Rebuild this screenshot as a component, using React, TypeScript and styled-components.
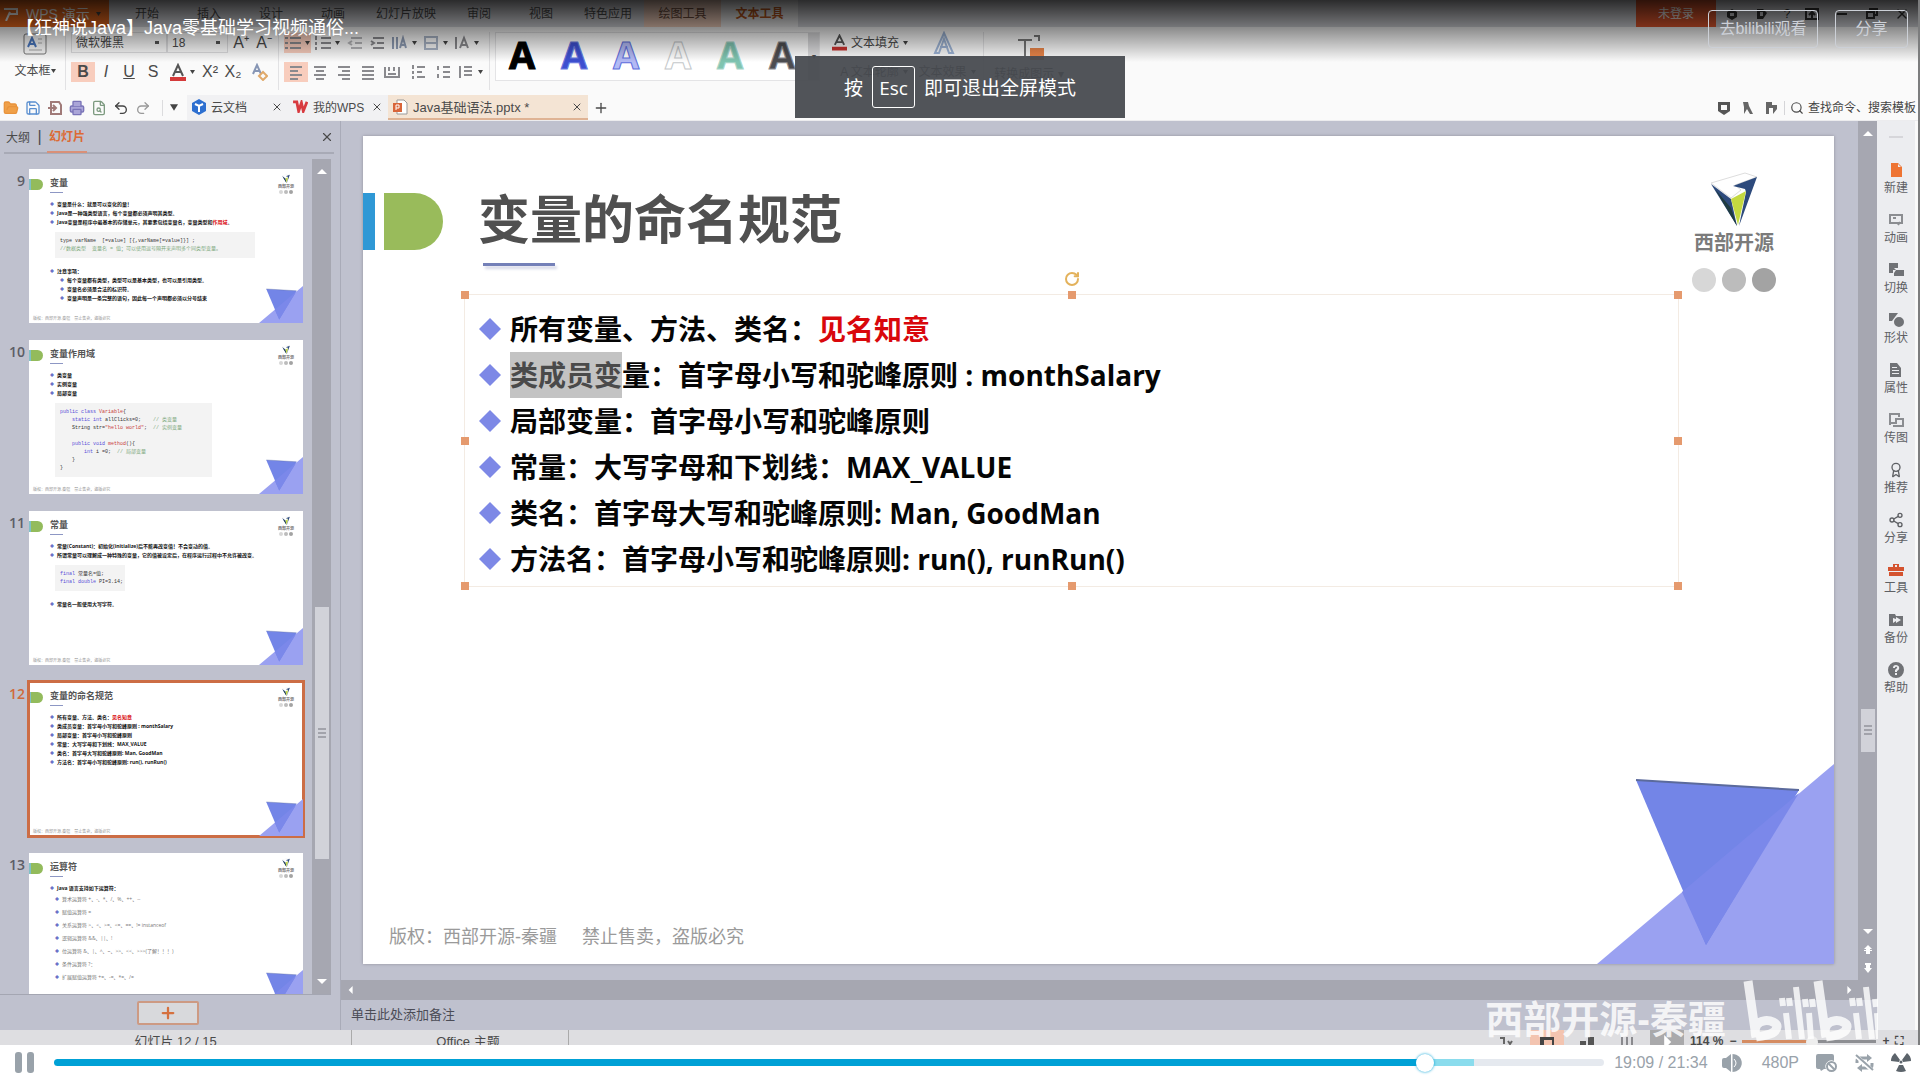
import React from "react";
import styled, { createGlobalStyle, css } from "styled-components";
import {
  FolderOpen,
  Save,
  Printer,
  Undo2,
  Redo2,
  Search,
  Share2,
  Plus,
  X,
  FileSearch,
  Award,
  RotateCw,
} from "lucide-react";

const ui = `"Liberation Sans", "Noto Sans CJK SC", sans-serif`;
const deck = `"Open Sans", "Noto Sans CJK SC", sans-serif`;
const mono = `"Liberation Mono", "Noto Sans CJK SC", monospace`;

const Global = createGlobalStyle`
  * { box-sizing: border-box; }
  body { margin: 0; background: #fff; font-family: ${ui}; color: #4a4a4a; }
  button, input, select { font: inherit; color: inherit; margin: 0; padding: 0; border: 0; background: none; }
  h1, h2, p, ul, ol, pre { margin: 0; padding: 0; }
  ul, ol { list-style: none; }
  svg { display: block; flex: none; }
`;

/* ---------- player shell ---------- */
const Player = styled.div`
  display: flex;
  flex-direction: column;
  height: 100vh;
  overflow: hidden;
`;
const Video = styled.main`
  position: relative;
  flex: 1;
  min-height: 0;
  display: flex;
  flex-direction: column;
  overflow: hidden;
  background: #fafafa;
  border-right: 2px solid #7c7d7e;
`;
const TopShade = styled.header`
  position: absolute;
  inset: 0 -2px auto 0;
  height: 62px;
  padding: 10px 12px 0 16px;
  display: flex;
  align-items: flex-start;
  gap: 17px;
  background: linear-gradient(rgba(0, 0, 0, 0.8), rgba(0, 0, 0, 0));
`;
const VideoTitle = styled.h1`
  flex: 1;
  font-size: 18px;
  line-height: 36px;
  font-weight: 400;
  color: #fff;
`;
const OutlineLink = styled.a<{ $w: number }>`
  width: ${(p) => p.$w}px;
  height: 38px;
  border: 1px solid #ccd0d7;
  border-radius: 4px;
  color: #ccd0d7;
  font-size: 16px;
  line-height: 36px;
  text-align: center;
  text-decoration: none;
`;
const Toast = styled.div`
  position: absolute;
  top: 56px;
  left: 50%;
  width: 330px;
  height: 62px;
  margin-left: -164px;
  display: flex;
  align-items: center;
  justify-content: center;
  gap: 9px;
  background: rgba(70, 73, 79, 0.94);
  color: #fff;
  font-family: ${deck};
  font-size: 19px;
`;
const Key = styled.kbd`
  width: 43px;
  height: 42px;
  border: 1px solid #fff;
  border-radius: 3px;
  font-family: inherit;
  font-size: 19px;
  line-height: 42px;
  text-align: center;
`;
const Watermark = styled.div`
  position: absolute;
  right: 40px;
  bottom: 0;
  display: flex;
  align-items: flex-end;
  gap: 16px;
  color: rgba(255, 255, 255, 0.82);
  font-size: 38px;
  line-height: 50px;
  font-weight: 700;
  height: 66px;
`;

/* ---------- title bar ---------- */
const TitleBar = styled.nav`
  display: flex;
  flex: none;
  height: 27px;
  background: #d6d7dc;
  font-size: 12px;
  line-height: 28px;
`;
const AppTab = styled.div`
  display: flex;
  align-items: center;
  gap: 6px;
  width: 109px;
  padding-left: 4px;
  margin-right: 7px;
  background: #ee6b1e;
  color: #fff;
  font-size: 14px;
`;
const MenuTab = styled.button<{ $tone?: "warm" | "open" }>`
  min-width: 62px;
  padding: 0 12px;
  line-height: 28px;
  ${(p) => p.$tone && css`min-width: 77px; color: #c05a20;`}
  ${(p) => p.$tone === "warm" && css`background: #f2cfbd; color: #6b4a3a;`}
  ${(p) => p.$tone === "open" && css`background: #f2f2f3; font-weight: 700;`}
`;
const Grow = styled.span`
  flex: 1;
`;
const Login = styled.button`
  width: 80px;
  background: #e4592f;
  color: #fff;
`;
const WindowTools = styled.div`
  display: flex;
  align-items: center;
  justify-content: space-between;
  width: 202px;
  padding: 0 8px 0 8px;
  color: #333;
`;

/* ---------- ribbon ---------- */
const Ribbon = styled.section`
  display: flex;
  flex: none;
  height: 68px;
  padding-top: 5px;
  font-size: 12px;
`;
const Group = styled.div<{ $w: number }>`
  display: flex;
  flex-direction: column;
  gap: 8px;
  flex: none;
  width: ${(p) => p.$w}px;
  height: 58px;
  padding-left: 5px;
  border-right: 1px solid #e2e2e4;
`;
const Row = styled.div`
  display: flex;
  align-items: center;
  height: 21px;
`;
const Tool = styled.button<{ $w: number; $on?: boolean }>`
  display: flex;
  align-items: center;
  justify-content: center;
  gap: 4px;
  flex: none;
  width: ${(p) => p.$w}px;
  height: 20px;
  background: ${(p) => (p.$on ? "#f8cdbd" : "none")};
  font-size: 16px;
  line-height: 20px;
  white-space: nowrap;
`;
const TextTool = styled(Tool)`
  font-size: 12px;
`;
const BoxTool = styled.button`
  display: flex;
  flex-direction: column;
  align-items: center;
  gap: 4px;
  font-size: 12px;
  line-height: 20px;
`;
const Pick = styled.select<{ $w: number }>`
  appearance: none;
  width: ${(p) => p.$w}px;
  height: 21px;
  padding-left: 4px;
  border: 1px solid #dcdcde;
  font-size: 12px;
  background: linear-gradient(#555, #555) right 7px center / 4px 3px no-repeat;
`;
const Gallery = styled.div`
  display: flex;
  flex: none;
  width: 325px;
  height: 49px;
  margin: 0 8px 0 5px;
  border: 1px solid #e4e4e6;
  background: #fff;
`;
const Art = styled.button<{ $c: string; $o: string }>`
  width: 52px;
  height: 42px;
  font-family: ${deck};
  font-size: 38px;
  line-height: 42px;
  font-weight: 700;
  color: ${(p) => p.$c};
  -webkit-text-stroke: 1px ${(p) => p.$o};
`;
const GalleryMore = styled.button`
  flex: 1;
  background: #dcdcde;
  font-size: 8px;
`;

/* ---------- document tabs ---------- */
const DocBar = styled.section`
  display: flex;
  align-items: center;
  flex: none;
  height: 26px;
  border-bottom: 1px solid #ececee;
  font-size: 12px;
`;
const Quick = styled.button<{ $c: string }>`
  width: 22px;
  display: grid;
  place-items: center;
  color: ${(p) => p.$c};
`;
const QuickSet = styled.div`
  display: flex;
  width: 187px;
`;
const QuickMore = styled(Quick)`
  margin-left: 8px;
  border-left: 1px solid #dcdcde;
`;
const DocTab = styled.div<{ $w: number; $on?: boolean }>`
  display: flex;
  align-items: center;
  gap: 5px;
  width: ${(p) => p.$w}px;
  height: 25px;
  padding: 0 5px;
  white-space: nowrap;
  background: ${(p) => (p.$on ? "#f4e4d4" : "#f1f1f3")};
  border-bottom: 2px solid ${(p) => (p.$on ? "#dfb394" : "#f1f1f3")};
  font-size: ${(p) => (p.$on ? 13 : 12)}px;
`;
const Close = styled.button`
  margin-left: auto;
`;
const Find = styled.label`
  display: flex;
  align-items: center;
  gap: 4px;
  padding-left: 5px;
  border-left: 1px solid #d5d5d8;
`;
const FindBox = styled.input`
  width: 110px;
  &::placeholder { color: #444; opacity: 1; }
`;

/* ---------- workspace ---------- */
const Work = styled.section`
  display: flex;
  flex: 1;
  min-height: 0;
  background: #bfc1ce;
`;
const Side = styled.aside`
  display: flex;
  flex-direction: column;
  flex: none;
  width: 341px;
  border-right: 1px solid #a9abb8;
`;
const SideHead = styled.div`
  display: flex;
  align-items: center;
  flex: none;
  height: 33px;
  margin: 0 6px 5px 4px;
  border-bottom: 2px solid #a8aab6;
  font-size: 12px;
`;
const SideTab = styled.button<{ $on?: boolean }>`
  height: 33px;
  padding: 0 2px;
  ${(p) => p.$on && css`color: #dc6a35; font-weight: 700; border-bottom: 2px solid #d99078;`}
`;
const SideBody = styled.div`
  display: flex;
  flex: 1;
  min-height: 0;
  margin-right: 9px;
  border-bottom: 1px solid #a4a6b2;
`;
const Deck = styled.ol`
  flex: 1;
  display: flex;
  flex-direction: column;
  gap: 17px;
  padding-top: 10px;
  overflow: hidden;
`;
const Entry = styled.li<{ $on?: boolean }>`
  display: flex;
  flex: none;
  height: 154px;
  font-size: 14px;
  line-height: 24px;
  font-family: ${deck};
  font-weight: 600;
  color: ${(p) => (p.$on ? "#cf6a3d" : "#5c5d66")};
`;
const Num = styled.span`
  width: 29px;
  padding-right: 4px;
  text-align: right;
`;
const Mini = styled.article<{ $on?: boolean }>`
  position: relative;
  width: 274px;
  height: 154px;
  background: #fff;
  color: #111;
  font-family: ${deck};
  font-size: 5px;
  line-height: 9px;
  overflow: hidden;
  outline: ${(p) => (p.$on ? "3px solid #cc6d45" : "none")};
  outline-offset: -1px;
`;
const MiniHead = styled.div`
  display: flex;
  align-items: flex-start;
  height: 31px;
  padding-top: 5px;
`;
const MiniMark = styled.span`
  width: 14px;
  height: 11px;
  margin: 5px 7px 0 0;
  border-left: 2px solid #7fc0c8;
  border-radius: 0 6px 6px 0;
  background: #93bb5c;
`;
const MiniTitle = styled.h2`
  flex: 1;
  font-size: 9px;
  line-height: 18px;
  color: #555;
  &::after { content: ""; display: block; width: 13px; height: 1px; background: #8d97c4; }
`;
const MiniLine = styled.p<{ $kind: string }>`
  padding-left: ${(p) => (p.$kind === "b" ? 21 : p.$kind === "s" ? 31 : 26)}px;
  line-height: ${(p) => (p.$kind === "l" ? 12 : 9)}px;
  font-weight: ${(p) => (p.$kind === "l" ? 400 : 700)};
  color: ${(p) => (p.$kind === "l" ? "#777" : "#111")};
  white-space: nowrap;
  &::before { content: "◆"; color: #6a72c8; display: inline-block; width: 7px; font-size: 4px; font-weight: 400; }
`;
const MiniCode = styled.div<{ $w: number }>`
  width: ${(p) => p.$w}px;
  margin: 5px 0 9px 26px;
  padding: 5px 5px;
  background: #f3f3f3;
  font-family: ${mono};
  font-weight: 400;
  font-size: 5px;
  color: #333;
`;
const CodeLine = styled.pre`
  height: 8px;
  line-height: 8px;
  font-family: inherit;
`;
const Ink = styled.span<{ $c: string }>`
  color: ${(p) => p.$c};
`;
const MiniFoot = styled.p`
  position: absolute;
  left: 4px;
  bottom: 0;
  font-size: 4px;
  font-weight: 400;
  color: #999;
`;
const Corner = styled.div`
  position: absolute;
  right: 0;
  bottom: 0;
`;
const MiniBrand = styled.div`
  display: flex;
  flex-direction: column;
  align-items: center;
  width: 16px;
  margin-right: 9px;
  font-size: 4px;
  line-height: 7px;
  font-weight: 700;
  color: #777;
`;
const SideFoot = styled.div`
  display: grid;
  place-items: center;
  flex: none;
  height: 35px;
  padding-right: 4px;
`;
const AddSlide = styled.button`
  display: grid;
  place-items: center;
  width: 62px;
  height: 24px;
  border: 2px solid #cd9a83;
  border-radius: 2px;
  background: #d8d9dc;
  color: #d5713f;
`;
const VBar = styled.div<{ $w: number }>`
  display: flex;
  flex-direction: column;
  align-items: center;
  flex: none;
  width: ${(p) => p.$w}px;
  padding: 7px 0;
  gap: 8px;
  background: #a6a7b1;
`;
const Spacer = styled.span<{ $n: number }>`
  flex: ${(p) => p.$n};
`;
const Grip = styled.span<{ $n: number }>`
  display: grid;
  place-items: center;
  flex: ${(p) => p.$n};
  width: 14px;
  background: #d1d2d9;
`;
const Stage = styled.div`
  display: flex;
  flex-direction: column;
  flex: 1;
  min-width: 0;
`;
const StageTop = styled.div`
  display: flex;
  flex: 1;
  min-height: 0;
`;
const HBar = styled.div`
  display: flex;
  align-items: center;
  justify-content: space-between;
  flex: none;
  height: 20px;
  padding: 0 24px 0 6px;
  background: #a6a7b1;
`;
const Notes = styled.input`
  flex: none;
  height: 30px;
  padding: 0 0 2px 10px;
  font-size: 13px;
  &::placeholder { color: #4b4c56; opacity: 1; }
`;

/* ---------- current slide ---------- */
const Slide = styled.article`
  position: relative;
  display: flex;
  flex-direction: column;
  flex: 1;
  margin: 15px 24px 16px 22px;
  background: #fff;
  box-shadow: 0 0 3px #90919c;
  font-family: ${deck};
  color: #050505;
`;
const SlideHead = styled.div`
  display: flex;
  height: 158px;
`;
const Heading = styled.div`
  flex: 1;
  padding-top: 57px;
`;
const HeadRow = styled.div`
  display: flex;
  align-items: flex-start;
  gap: 9px;
  height: 57px;
`;
const BlueBar = styled.span`
  width: 12px;
  height: 57px;
  background: #2f98d5;
`;
const GreenTab = styled.span`
  width: 59px;
  height: 57px;
  margin-right: 26px;
  border-radius: 0 29px 29px 0;
  background: #99bb5b;
`;
const SlideTitle = styled.h2`
  font-size: 52px;
  line-height: 52px;
  font-weight: 700;
  color: #505050;
`;
const Rule = styled.div`
  width: 72px;
  height: 3px;
  margin: 13px 0 0 120px;
  background: #7480b8;
  box-shadow: 2px 3px 3px #d4d6e6;
`;
const Brand = styled.div`
  display: flex;
  flex-direction: column;
  align-items: center;
  width: 84px;
  margin-right: 58px;
  padding-top: 36px;
  font-size: 20px;
  line-height: 34px;
  font-weight: 700;
  color: #7b7b7b;
`;
const BrandDots = styled.div`
  padding-top: 8px;
`;
const TextFrame = styled.div`
  position: relative;
  margin: 0 155px 0 101px;
  padding: 11px 0 4px 14px;
  border: 1px solid #f3ebe3;
`;
const Handle = styled.span<{ $x: number; $y: number }>`
  position: absolute;
  left: ${(p) => p.$x}%;
  top: ${(p) => p.$y}%;
  width: 8px;
  height: 8px;
  margin: -4px 0 0 -4px;
  background: #e59a6e;
`;
const Rotate = styled.span`
  position: absolute;
  left: 50%;
  top: -24px;
  margin-left: -8px;
  color: #e3b25c;
`;
const Point = styled.li`
  display: flex;
  align-items: center;
  gap: 9px;
  height: 46px;
  font-size: 28px;
  line-height: 46px;
  font-weight: 700;
  white-space: pre;
`;
const Red = styled.span`
  color: #d9080c;
`;
const Picked = styled.mark`
  display: inline-block;
  background: #c3c3c3;
  color: #4a4a4a;
`;
const Rights = styled.p`
  margin-top: auto;
  padding: 0 0 14px 26px;
  font-family: ${ui};
  font-size: 18px;
  line-height: 26px;
  color: #9a9a9a;
  white-space: pre;
`;

/* ---------- right tool strip & status ---------- */
const Strip = styled.nav`
  display: flex;
  flex-direction: column;
  align-items: center;
  flex: none;
  width: 41px;
  padding-top: 15px;
  background: #ecedf0;
  border-right: 3px solid #fafafa;
`;
const StripGrip = styled.span`
  width: 14px;
  height: 2px;
  margin-bottom: 24px;
  background: #d6d6da;
`;
const StripItem = styled.button`
  display: flex;
  flex-direction: column;
  align-items: center;
  height: 50px;
  font-size: 12px;
  line-height: 20px;
  color: #5e6064;
`;
const Status = styled.footer`
  display: flex;
  flex: none;
  height: 15px;
  overflow: hidden;
  background: #dedee1;
  font-size: 13px;
  line-height: 23px;
`;
const StatusCell = styled.span<{ $w: number }>`
  width: ${(p) => p.$w}px;
  padding-left: ${(p) => (p.$w > 300 ? 0 : 16)}px;
  border-right: 1px solid #aaa;
  text-align: center;
`;
const StatusTools = styled.div`
  display: flex;
  align-items: center;
  width: 428px;
  height: 23px;
  gap: 6px;
  font-size: 12px;
  font-weight: 700;
`;
const ViewButton = styled.button<{ $bg?: string }>`
  display: grid;
  place-items: center;
  width: 34px;
  height: 23px;
  background: ${(p) => p.$bg || "none"};
`;
const Zoom = styled.input`
  appearance: none;
  width: 134px;
  height: 3px;
  background: linear-gradient(90deg, #d58c62 52%, #8d8e92 52%);
  &::-webkit-slider-thumb { appearance: none; width: 12px; height: 12px; border-radius: 50%; background: #eee; }
`;

/* ---------- player controls ---------- */
const Controls = styled.section`
  display: flex;
  align-items: center;
  flex: none;
  height: 35px;
  padding: 0 9px 0 15px;
  background: #fff;
  color: #99a2aa;
  font-size: 16px;
`;
const Ctl = styled.button<{ $gap: number; $dark?: boolean }>`
  flex: none;
  margin-left: ${(p) => p.$gap}px;
  color: ${(p) => (p.$dark ? "#5c646b" : "#99a2aa")};
  white-space: nowrap;
`;
const Seek = styled.input`
  appearance: none;
  flex: 1;
  min-width: 0;
  height: 7px;
  margin: 0 10px 0 20px;
  border-radius: 4px;
  background: linear-gradient(90deg, #00a1d6 88.4%, #8adced 88.4%, #8adced 91.6%, #e5e9ef 91.6%);
  &::-webkit-slider-thumb {
    appearance: none;
    width: 18px;
    height: 18px;
    border-radius: 50%;
    background: #fff;
    box-shadow: 0 0 3px #00a1d6;
  }
`;
const Time = styled.span`
  white-space: nowrap;
`;

/* ---------- drawings ---------- */
const Arrow = ({ d = "down", s = 10 }: { d?: string; s?: number }) => (
  <svg width={s} height={s} viewBox="0 0 10 10" fill="#fff">
    <path d={d === "up" ? "M0 8 5 3l5 5z" : d === "left" ? "M7 0 2 5l5 5z" : d === "right" ? "M3 0l5 5-5 5z" : "M0 2h10L5 7z"} />
  </svg>
);
const Caret = ({ w = 5 }: { w?: number }) => (
  <svg width={w} height={w - 1} viewBox="0 0 10 8" fill="#444"><path d="M0 0h10L5 8z" /></svg>
);
const DoubleArrow = ({ up }: { up?: boolean }) => (
  <svg width="10" height="10" viewBox="0 0 10 10" fill="#fff">
    {up ? <path d="M1 4 5 0l4 4H7v1h2v1H7v3H3V6H1V5h2V4z" /> : <path d="M2 0h6v2H7v3h2L5 10 1 5h2V2H2z" />}
  </svg>
);
const GripLines = () => (
  <svg width="8" height="10" stroke="#a2a3ab" strokeWidth="2"><path d="M0 1h8M0 5h8M0 9h8" /></svg>
);
const Lines = ({ d, c = "#8a8a8e" }: { d: string; c?: string }) => (
  <svg width="16" height="16" viewBox="0 0 16 16" fill="none" stroke={c} strokeWidth="2"><path d={d} /></svg>
);
const Solid = ({ d, c = "#707276" }: { d: string; c?: string }) => (
  <svg width="16" height="16" viewBox="0 0 16 16" fill={c} fillRule="evenodd"><path d={d} /></svg>
);
const Triangles = ({ w }: { w: number }) => (
  <svg width={w} height={Math.round((w * 200) / 237)} viewBox="0 0 237 200" preserveAspectRatio="none">
    <path d="M0 200 237 0v200z" fill="#9aa1f1" />
    <path d="M39 16 202 26 109 181z" fill="#7385e7" />
    <path d="M39 16 202 26" stroke="#5b6a9c" strokeWidth="2" />
    <path d="M202 29 109 181 85 128z" fill="#7b88ea" />
  </svg>
);
const Mark = ({ w }: { w: number }) => (
  <svg width={w} height={Math.round((w * 54) / 46)} viewBox="0 0 46 54">
    <path d="M0 11 34 1 46 5 24 13 30 18 20 26z" fill="#fff" stroke="#ddd" strokeWidth="1" />
    <path d="M0 12 20 27 26 54z" fill="#2d4a7c" />
    <path d="M46 5 22 14 34 17 35 20 28 54z" fill="#2d4a7c" />
    <path d="M20 27 35 19 27 53z" fill="#c4d940" />
    <path d="M4 17 20 36 26 54z" fill="#1f3b3f" />
  </svg>
);
const Dots = ({ w }: { w: number }) => (
  <svg width={w} height={Math.round((w * 24) / 84)} viewBox="0 0 84 24">
    <circle cx="12" cy="12" r="12" fill="#d7d7d7" />
    <circle cx="42" cy="12" r="12" fill="#bcbcbc" />
    <circle cx="72" cy="12" r="12" fill="#a3a3a3" />
  </svg>
);
const Diamond = () => (
  <svg width="22" height="22" viewBox="0 0 22 22"><path d="M11 0 22 11 11 22 0 11z" fill="#7d88e6" /></svg>
);
const SiteLogo = () => (
  <svg width="136" height="66" viewBox="0 0 136 66" fill="none" stroke="#fff" strokeOpacity=".8" strokeWidth="9">
    <path d="M6 2 14 58C8 36 36 40 35 48 34 56 20 57 14 58" />
    <path d="M44 34l3 26M40 19l1 8M47 19l1 8M54 8l6 52M67 34l2 26M63 20l1 8M70 20l1 8" strokeWidth="6" />
    <path d="M76 2 84 58C78 36 106 40 105 48 104 56 90 57 84 58" />
    <path d="M114 34l3 26M110 19l1 8M117 19l1 8M124 8l6 52M135 34l2 26M133 20l1 8" strokeWidth="6" />
  </svg>
);

/* ---------- data ---------- */
const menus = ["开始", "插入", "设计", "动画", "幻灯片放映", "审阅", "视图", "特色应用"];
const arts = [
  ["#000", "#000"],
  ["#3d4fd0", "#6a7ae0"],
  ["#b3baf5", "#5f6fdc"],
  ["#fff", "#c5c9cb"],
  ["#7fc4b0", "#a8d5c8"],
  ["#4c4c50", "#8b8b90"],
];
const strip: [string, React.ReactNode][] = [
  ["新建", <Solid c="#ee7433" d="M3 1h7l4 4v10H3zM10 2v3h3z" />],
  ["动画", <Lines c="#8b8d91" d="M2 3h12v8H2zM5 6h3M10 13l2-3" />],
  ["切换", <Solid d="M1 1h9v5H6l2 2H5v3H1zM8 8h8v6H6v-3z" />],
  ["形状", <Solid d="M1 1h9L7 5 4 9H1zM11 5a5 5 0 1 1 0 10 5 5 0 0 1 0-10z" />],
  ["属性", <Solid d="M2 1h7l4 5v9H2zM4 5h5v1H4zM4 8h7v1H4zM4 11h7v1H4z" />],
  ["传图", <Lines c="#8b8d91" d="M2 13V2h9v3M5 14h10V7H8v4H3" />],
  ["推荐", <Award size={16} />],
  ["分享", <Share2 size={16} />],
  ["工具", <Solid c="#d4532f" d="M5 2h6v3h5v4H0V5h5zM7 3v2h2V3zM1 10h14v4H1z" />],
  ["备份", <Solid d="M1 2h6l1 2h7v10H1zM5 6v5l3-2v2l5-3-5-3v2z" />],
  ["帮助", <Solid d="M8 0a8 8 0 1 1 0 16A8 8 0 0 1 8 0zM5 6h2c0-2 3-1 2 0L7 8v2h2V9c4-2 2-6-1-6-2 0-3 1-3 3zM7 11h2v2H7z" />],
];
const K = "#5a50d8", G = "#7da97d", R = "#c84040";

const MiniSlide = ({ n, title, on, children }: { n: number; title: string; on?: boolean; children: React.ReactNode }) => (
  <Entry $on={on}>
    <Num>{n}</Num>
    <Mini $on={on}>
      <MiniHead>
        <MiniMark />
        <MiniTitle>{title}</MiniTitle>
        <MiniBrand><Mark w={8} />西部开源<Dots w={14} /></MiniBrand>
      </MiniHead>
      {children}
      <MiniFoot>版权：西部开源-秦疆　禁止售卖，盗版必究</MiniFoot>
      <Corner><Triangles w={44} /></Corner>
    </Mini>
  </Entry>
);
const L = ({ k = "b", children }: { k?: string; children: React.ReactNode }) => <MiniLine $kind={k}>{children}</MiniLine>;

export default function App() {
  return (
    <Player>
      <Global />
      <Video>
        <TitleBar aria-label="菜单">
          <AppTab>
            <svg width="16" height="14" viewBox="0 0 16 14" fill="none" stroke="#fff" strokeWidth="2"><path d="M0 2h13v5H5M2 14l4-9" /></svg>
            WPS 演示 <Caret />
          </AppTab>
          {menus.map((m) => <MenuTab key={m}>{m}</MenuTab>)}
          <MenuTab $tone="warm">绘图工具</MenuTab>
          <MenuTab $tone="open">文本工具</MenuTab>
          <Grow />
          <Login>未登录</Login>
          <WindowTools>
            <Solid c="#333" d="M8 3l5 3v5l-5 3-5-3V6zM6 7v3h4V7z" />
            <Solid c="#333" d="M3 3h6l4 4-4 6H3zM6 6v4h3V6z" />
            <span>?</span>
            <Lines c="#333" d="M2 3h12v10H2zM8 12V6M5 9l3-3 3 3" />
            <Lines c="#333" d="M3 8h10" />
            <Lines c="#333" d="M3 6h7v6H3zM6 6V3h7v6h-3" />
            <X size={16} />
          </WindowTools>
        </TitleBar>

        <Ribbon aria-label="文本工具">
          <Group $w={66}>
            <BoxTool>
              <svg width="24" height="24" viewBox="0 0 24 24" fill="none" stroke="#777"><rect x="1" y="2" width="22" height="20" rx="2" /><path d="M5 15 9 6l4 9M6 12h6" stroke="#4a78c0" strokeWidth="2" /><path d="M15 7h4M15 11h4M6 18h13" stroke="#aaa" /></svg>
              <Row>文本框 <Caret /></Row>
            </BoxTool>
          </Group>
          <Group $w={213}>
            <Row>
              <Pick $w={96} aria-label="字体"><option>微软雅黑</option></Pick>
              <Pick $w={61} aria-label="字号"><option>18</option></Pick>
              <Tool $w={26}>A⁺</Tool>
              <Tool $w={20}>A⁻</Tool>
            </Row>
            <Row>
              <Tool $w={24} $on><b>B</b></Tool>
              <Tool $w={22}><i>I</i></Tool>
              <Tool $w={24}><u>U</u></Tool>
              <Tool $w={24}>S</Tool>
              <Tool $w={34}>
                <svg width="16" height="18" viewBox="0 0 16 18" fill="none" stroke="#555" strokeWidth="2"><path d="M3 13 8 2l5 11M5 9h6" /><path d="M0 16h16" stroke="#d43a3a" strokeWidth="4" /></svg>
                <Caret />
              </Tool>
              <Tool $w={22}>X²</Tool>
              <Tool $w={24}>X₂</Tool>
              <Tool $w={30}>
                <svg width="16" height="18" viewBox="0 0 16 18" fill="none" stroke="#8796b5" strokeWidth="2"><path d="M1 11 5 2l4 9M3 8h5" /><path d="M7 13l4-4 4 4-4 4z" stroke="#e0a96a" /></svg>
              </Tool>
            </Row>
          </Group>
          <Group $w={211}>
            <Row>
              <Tool $w={27} $on><Lines d="M5 3h11M5 8h11M5 13h11M0 3h3M0 8h3M0 13h3" /><Caret /></Tool>
              <Tool $w={33}><Lines d="M6 3h10M6 8h10M6 13h10M1 1v4M1 7v3M1 12v3" /><Caret /></Tool>
              <Tool $w={22}><Lines c="#b5b5b8" d="M4 3h11M8 8h7M4 13h11M5 6 2 8l3 2" /></Tool>
              <Tool $w={22}><Lines d="M4 3h11M8 8h7M4 13h11M2 6l3 2-3 2" /></Tool>
              <Tool $w={32}><Lines c="#8f9db5" d="M1 2v12M5 2v12M8 13l3-10 3 10M9 10h5" /><Caret /></Tool>
              <Tool $w={30}><Lines c="#a9b4c6" d="M2 2h12v12H2zM2 8h12" /><Caret /></Tool>
              <Tool $w={32}><Lines d="M2 2v12M6 13 10 3l4 10M7 10h6" /><Caret /></Tool>
            </Row>
            <Row>
              <Tool $w={24} $on><Lines d="M2 3h12M2 7h8M2 11h12M2 15h8" /></Tool>
              <Tool $w={24}><Lines d="M2 3h12M4 7h8M2 11h12M4 15h8" /></Tool>
              <Tool $w={24}><Lines d="M2 3h12M6 7h8M2 11h12M6 15h8" /></Tool>
              <Tool $w={24}><Lines d="M2 3h12M2 7h12M2 11h12M2 15h12" /></Tool>
              <Tool $w={24}><Lines d="M1 3v10h14V3M5 3v4M10 3v4M4 10h8" /></Tool>
              <Tool $w={27}><Lines d="M3 1v4M3 7v3M3 12v3M7 3h8M7 8h5M7 13h8" /></Tool>
              <Tool $w={24}><Lines d="M3 2v4M3 10v4M8 3h7M8 8h7M8 13h7" /></Tool>
              <Tool $w={30}><Lines d="M2 2v12M6 3h8M6 7h8M6 11h8" /><Caret /></Tool>
            </Row>
          </Group>
          <Gallery>
            {arts.map(([c, o]) => <Art key={c} $c={c} $o={o}>A</Art>)}
            <GalleryMore aria-label="更多">▾</GalleryMore>
          </Gallery>
          <Group $w={156}>
            <Row>
              <TextTool $w={74}>
                <svg width="15" height="18" viewBox="0 0 16 18" fill="none" stroke="#555" strokeWidth="2"><path d="M3 11 8 1l5 10M5 8h6" /><path d="M0 15h16" stroke="#c8322f" strokeWidth="4" /></svg>
                文本填充 <Caret />
              </TextTool>
              <TextTool $w={74}>
                <svg width="22" height="24" viewBox="0 0 22 24" fill="none" stroke="#9db4d6" strokeWidth="2"><path d="M2 22 11 2l9 20h-4l-5-14-5 14zM7 16h8" /></svg>
              </TextTool>
            </Row>
            <Row>
              <TextTool $w={82}>A 文本轮廓 <Caret /></TextTool>
              <TextTool $w={64}>文本效果 <Caret /></TextTool>
            </Row>
          </Group>
          <BoxTool>
            <svg width="90" height="28" viewBox="0 0 90 28" fill="none" stroke="#777" strokeWidth="2"><path d="M34 8h14M41 8v16M50 4h5v5" /><path d="M46 16h14v12H46z" fill="#e98448" stroke="none" /></svg>
            <span>转换成图示 ▾</span>
          </BoxTool>
        </Ribbon>

        <DocBar aria-label="文档">
          <QuickSet>
            <Quick $c="#e8933c" aria-label="打开"><FolderOpen size={16} fill="#f0a048" /></Quick>
            <Quick $c="#5a8fd0" aria-label="保存"><Save size={16} /></Quick>
            <Quick $c="#b06a6a" aria-label="输出"><Lines c="#a07a78" d="M4 2h8l2 3v9H4zM1 8h8M6 5l3 3-3 3" /></Quick>
            <Quick $c="#7a74b8" aria-label="打印"><Printer size={16} fill="#aaa5d8" /></Quick>
            <Quick $c="#7d9a80" aria-label="预览"><FileSearch size={16} /></Quick>
            <Quick $c="#444" aria-label="撤销"><Undo2 size={16} /></Quick>
            <Quick $c="#999" aria-label="重做"><Redo2 size={16} /></Quick>
            <QuickMore $c="#555" aria-label="更多"><Caret w={8} /></QuickMore>
          </QuickSet>
          <DocTab $w={101}>
            <svg width="14" height="16" viewBox="0 0 14 16"><path d="M7 0 14 4v8l-7 4-7-4V4z" fill="#2d6fd0" /><path d="M3 5l4 2 4-2M7 7v6" stroke="#fff" strokeWidth="2" fill="none" /></svg>
            云文档<Close aria-label="关闭"><X size={12} /></Close>
          </DocTab>
          <DocTab $w={100}>
            <svg width="15" height="13" viewBox="0 0 16 14" fill="none" stroke="#d83a3f" strokeWidth="3"><path d="M0 2h4l2 10 3-9 2 9 4-10" /></svg>
            我的WPS<Close aria-label="关闭"><X size={12} /></Close>
          </DocTab>
          <DocTab $w={200} $on>
            <svg width="15" height="16" viewBox="0 0 15 16"><path d="M4 1h7l3 3v11H4z" fill="#fff" stroke="#999" /><path d="M0 4h9v9H0z" fill="#d9653a" /><path d="M3 11V6h3v3H3" stroke="#fff" fill="none" /></svg>
            Java基础语法.pptx *<Close aria-label="关闭"><X size={12} /></Close>
          </DocTab>
          <Tool $w={26} aria-label="新建标签"><Plus size={16} /></Tool>
          <Grow />
          <Tool $w={24}><Solid c="#555" d="M2 2h12v9l-6 4-6-4zM5 5v5h6V5z" /></Tool>
          <Tool $w={24}><Solid c="#666" d="M3 2h5l1 4 4 8h-3L7 9l-3 5V7z" /></Tool>
          <Tool $w={24}><Solid c="#666" d="M2 2h6v3h5v4l-4 5V8H5v6H2z" /></Tool>
          <Find>
            <Search size={14} />
            <FindBox placeholder="查找命令、搜索模板" aria-label="查找命令" />
          </Find>
        </DocBar>

        <Work>
          <Side>
            <SideHead>
              <SideTab>大纲</SideTab><Tool $w={15}>|</Tool><SideTab $on>幻灯片</SideTab>
              <Close aria-label="关闭窗格"><X size={14} /></Close>
            </SideHead>
            <SideBody>
              <Deck>
                <MiniSlide n={9} title="变量">
                  <L>变量是什么：就是可以变化的量！</L>
                  <L>Java是一种强类型语言，每个变量都必须声明其类型。</L>
                  <L>Java变量是程序中最基本的存储单元，其要素包括变量名，变量类型和<Red>作用域</Red>。</L>
                  <MiniCode $w={200}>
                    <CodeLine>{"type varName  [=value] [{,varName[=value]}] ;"}</CodeLine>
                    <CodeLine><Ink $c={G}>//数据类型  变量名 = 值；可以使用逗号隔开来声明多个同类型变量。</Ink></CodeLine>
                  </MiniCode>
                  <L>注意事项：</L>
                  <L k="s">每个变量都有类型，类型可以是基本类型，也可以是引用类型。</L>
                  <L k="s">变量名必须是合法的标识符。</L>
                  <L k="s">变量声明是一条完整的语句，因此每一个声明都必须以分号结束</L>
                </MiniSlide>
                <MiniSlide n={10} title="变量作用域">
                  <L>类变量</L><L>实例变量</L><L>局部变量</L>
                  <MiniCode $w={157}>
                    <CodeLine><Ink $c={K}>public class </Ink><Ink $c={R}>Variable</Ink>{"{"}</CodeLine>
                    <CodeLine>{"    "}<Ink $c={K}>static int</Ink>{" allClicks=0;    "}<Ink $c={G}>// 类变量</Ink></CodeLine>
                    <CodeLine>{"    String str="}<Ink $c={R}>"hello world"</Ink>{";  "}<Ink $c={G}>// 实例变量</Ink></CodeLine>
                    <CodeLine />
                    <CodeLine>{"    "}<Ink $c={K}>public void </Ink><Ink $c={R}>method</Ink>{"(){"}</CodeLine>
                    <CodeLine>{"        "}<Ink $c={K}>int</Ink>{" i =0;  "}<Ink $c={G}>// 局部变量</Ink></CodeLine>
                    <CodeLine>{"    }"}</CodeLine>
                    <CodeLine>{"}"}</CodeLine>
                  </MiniCode>
                </MiniSlide>
                <MiniSlide n={11} title="常量">
                  <L>常量(Constant)：初始化(initialize)后不能再改变值！不会变动的值。</L>
                  <L>所谓常量可以理解成一种特殊的变量，它的值被设定后，在程序运行过程中不允许被改变。</L>
                  <MiniCode $w={70}>
                    <CodeLine><Ink $c={K}>final</Ink>{" 常量名=值;"}</CodeLine>
                    <CodeLine><Ink $c={K}>final double</Ink>{" PI=3.14;"}</CodeLine>
                  </MiniCode>
                  <L>常量名一般使用大写字符。</L>
                </MiniSlide>
                <MiniSlide n={12} title="变量的命名规范" on>
                  <L>所有变量、方法、类名：<Red>见名知意</Red></L>
                  <L>类成员变量：首字母小写和驼峰原则 : monthSalary</L>
                  <L>局部变量：首字母小写和驼峰原则</L>
                  <L>常量：大写字母和下划线：MAX_VALUE</L>
                  <L>类名：首字母大写和驼峰原则: Man, GoodMan</L>
                  <L>方法名：首字母小写和驼峰原则: run(), runRun()</L>
                </MiniSlide>
                <MiniSlide n={13} title="运算符">
                  <L>Java 语言支持如下运算符：</L>
                  <L k="l">算术运算符 +、-、*、/、%、++、--</L>
                  <L k="l">赋值运算符 =</L>
                  <L k="l">{"关系运算符 >、<、>=、<=、==、!= instanceof"}</L>
                  <L k="l">{"逻辑运算符 &&、||、!"}</L>
                  <L k="l">{"位运算符 &、|、^、~、>>、<<、>>>(了解！！！)"}</L>
                  <L k="l">条件运算符 ?：</L>
                  <L k="l">扩展赋值运算符 +=、-=、*=、/=</L>
                </MiniSlide>
              </Deck>
              <VBar $w={19}>
                <Arrow d="up" /><Spacer $n={415} /><Grip $n={252}><GripLines /></Grip><Spacer $n={102} /><Arrow />
              </VBar>
            </SideBody>
            <SideFoot><AddSlide aria-label="新建幻灯片"><Plus size={18} strokeWidth={3} /></AddSlide></SideFoot>
          </Side>

          <Stage>
            <StageTop>
              <Slide>
                <SlideHead>
                  <Heading>
                    <HeadRow><BlueBar /><GreenTab /><SlideTitle>变量的命名规范</SlideTitle></HeadRow>
                    <Rule />
                  </Heading>
                  <Brand><Mark w={46} />西部开源<BrandDots><Dots w={84} /></BrandDots></Brand>
                </SlideHead>
                <TextFrame>
                  <ul>
                    <Point><Diamond /><span>所有变量、方法、类名：<Red>见名知意</Red></span></Point>
                    <Point><Diamond /><span><Picked>类成员变</Picked>量：首字母小写和驼峰原则 : monthSalary</span></Point>
                    <Point><Diamond />局部变量：首字母小写和驼峰原则</Point>
                    <Point><Diamond />常量：大写字母和下划线：MAX_VALUE</Point>
                    <Point><Diamond />类名：首字母大写和驼峰原则: Man, GoodMan</Point>
                    <Point><Diamond />方法名：首字母小写和驼峰原则: run(), runRun()</Point>
                  </ul>
                  {[[0, 0], [50, 0], [100, 0], [0, 50], [100, 50], [0, 100], [50, 100], [100, 100]].map(([x, y]) => (
                    <Handle key={`${x}-${y}`} $x={x} $y={y} />
                  ))}
                  <Rotate><RotateCw size={16} strokeWidth={3} /></Rotate>
                </TextFrame>
                <Rights>{"版权：西部开源-秦疆     禁止售卖，盗版必究"}</Rights>
                <Corner><Triangles w={237} /></Corner>
              </Slide>
              <VBar $w={19}>
                <Arrow d="up" /><Spacer $n={562} /><Grip $n={44}><GripLines /></Grip><Spacer $n={161} />
                <Arrow /><DoubleArrow up /><DoubleArrow />
              </VBar>
            </StageTop>
            <HBar><Arrow d="left" s={8} /><Arrow d="right" s={8} /></HBar>
            <Notes placeholder="单击此处添加备注" aria-label="备注" />
          </Stage>

          <Strip aria-label="工具栏">
            <StripGrip />
            {strip.map(([name, icon]) => <StripItem key={name}>{icon}{name}</StripItem>)}
          </Strip>
        </Work>

        <Status>
          <StatusCell $w={352}>幻灯片 12 / 15</StatusCell>
          <StatusCell $w={217}>Office 主题</StatusCell>
          <Grow />
          <StatusTools>
            <ViewButton aria-label="备注视图"><Lines c="#666" d="M1 4h4v6M9 7l2 3 2-3" /></ViewButton>
            <ViewButton $bg="#f3c4b0" aria-label="普通视图"><Solid c="#444" d="M1 3h14v10H1zM5 6v5h8V6z" /></ViewButton>
            <ViewButton aria-label="浏览视图"><Solid c="#555" d="M1 7h6v6H1zM9 3h6v10H9z" /></ViewButton>
            <ViewButton aria-label="阅读视图"><Lines d="M3 3v10M8 3v10M13 3v10" /></ViewButton>
            <ViewButton $bg="#a9a9ab" aria-label="播放"><Arrow d="right" s={14} /></ViewButton>
            <span>114 %</span><span>−</span>
            <Zoom type="range" defaultValue={52} aria-label="缩放" />
            <span>+</span><span>⛶</span>
          </StatusTools>
        </Status>

        <Watermark>西部开源-秦疆<SiteLogo /></Watermark>
        <TopShade>
          <VideoTitle>【狂神说Java】Java零基础学习视频通俗...</VideoTitle>
          <OutlineLink $w={110} href="#watch">去bilibili观看</OutlineLink>
          <OutlineLink $w={73} href="#share">分享</OutlineLink>
        </TopShade>
        <Toast>按 <Key>Esc</Key> 即可退出全屏模式</Toast>
      </Video>

      <Controls aria-label="播放控制">
        <Ctl $gap={0} aria-label="暂停">
          <svg width="19" height="21" viewBox="0 0 19 21" fill="currentColor"><rect width="7" height="21" rx="3" /><rect x="12" width="7" height="21" rx="3" /></svg>
        </Ctl>
        <Seek type="range" min={0} max={1294} defaultValue={1150} aria-label="播放进度" />
        <Time>19:09 / 21:34</Time>
        <Ctl $gap={14} aria-label="音量">
          <svg width="20" height="18" viewBox="0 0 20 18" fill="currentColor"><path d="M0 6q0-2 2-2h2l5-4v18l-5-4H2q-2 0-2-2z" /><path d="M10 0c13 0 13 18 0 18z" /><path d="M12 5q4 4 0 8M10 0v18" stroke="#fff" fill="none" /></svg>
        </Ctl>
        <Ctl $gap={20}>480P</Ctl>
        <Ctl $gap={17} aria-label="弹幕">
          <svg width="21" height="18" viewBox="0 0 21 18" fill="currentColor"><path d="M2 0h14q2 0 2 2v5a6 6 0 0 0-8 8H8l-3 2-1-2H2q-2 0-2-2V2q0-2 2-2z" /><circle cx="15.500" cy="12.500" r="4.500" fill="none" stroke="currentColor" strokeWidth="2" /><path d="M12 9l7 7" stroke="currentColor" strokeWidth="2" /></svg>
        </Ctl>
        <Ctl $gap={17} aria-label="循环">
          <svg width="21" height="18" viewBox="0 0 21 18" fill="none" stroke="currentColor" strokeWidth="3"><path d="M3 9V7q0-3 3-3h9M18 9v2q0 3-3 3H6" /><path d="M13 0l5 4-5 4zM8 10l-5 4 5 4z" fill="currentColor" stroke="none" /><path d="M1 1l18 16" stroke="#fff" strokeWidth="4" /><path d="M2 1l17 15" strokeWidth="2" /></svg>
        </Ctl>
        <Ctl $gap={16} $dark aria-label="退出全屏">
          <svg width="20" height="19" viewBox="0 0 20 19" fill="currentColor"><path d="M4 0 9 7q-1 1-1 2L0 8q0-5 4-8zM16 0l-5 7q1 1 1 2l8-1q0-5-4-8zM8 12h4l3 6q-5 2-10 0z" /><circle cx="10" cy="9" r="1.500" /></svg>
        </Ctl>
      </Controls>
    </Player>
  );
}
